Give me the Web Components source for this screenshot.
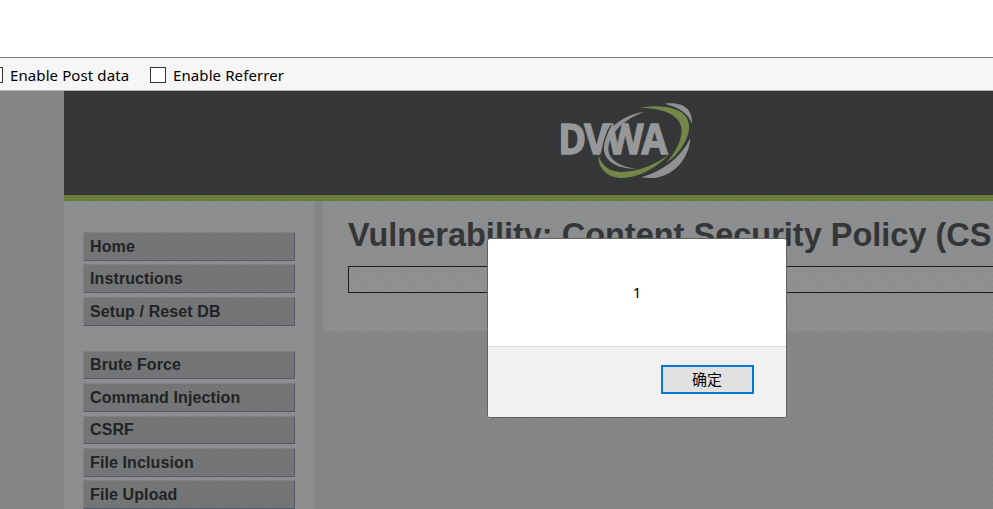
<!DOCTYPE html>
<html lang="en">
<head>
<meta charset="utf-8">
<title>DVWA</title>
<style>
html,body{margin:0;height:100%;overflow:hidden;background:#fff}
</style>
</head>
<body>
<dvwa-screen></dvwa-screen>
<script>
function define(name, html) {
  const tpl = document.createElement('template');
  tpl.innerHTML = html;
  customElements.define(name, class extends HTMLElement {
    constructor() {
      super();
      this.attachShadow({ mode: 'open' }).append(tpl.content.cloneNode(true));
    }
  });
}

define('check-option', `<style>
:host{display:flex;align-items:center;gap:7px;font:15px/20px "Noto Sans","Noto Sans CJK SC",sans-serif;color:#000;white-space:nowrap}
i{box-sizing:border-box;width:16px;height:16px;border:1px solid #333;background:#fff;flex:none}
span{display:block;width:var(--w);letter-spacing:.1px}
</style><i></i><span><slot></slot></span>`);

define('tool-bar', `<style>
:host{display:flex;box-sizing:border-box;height:34px;border-top:1px solid #777;border-bottom:1px solid #b5b9b6;background:#f6f6f6;align-items:center;gap:20px;padding-top:2px}
check-option:first-of-type{margin-left:-13px}
</style>
<check-option style="--w:120px">Enable Post data</check-option>
<check-option style="--w:112px">Enable Referrer</check-option>`);

define('dvwa-logo', `<style>
:host{display:block;width:170px;height:104px}
svg{display:block;width:170px;height:104px}
text{font-family:"Open Sans","Noto Sans",sans-serif;font-weight:700;letter-spacing:-6px}
</style>
<svg viewBox="0 3 510 312">
<g fill="#929394">
<path d="M313 66C270 70 225 94 203 130C181 168 190 205 223 223C243 233 267 238 291 236C254 232 226 220 212 200C187 158 237 91 313 66Z"/>
<path d="M374 41C424 35 458 52 456 102C447 74 423 53 374 41Z"/>
<path d="M451 145C447 204 405 254 350 263Q327 266 304 262C365 245 419 207 451 145Z"/>
</g>
<path fill="#768748" d="M298 54C350 44 408 48 436 77C457 103 448 142 419 181Q402 204 378 219C400 194 425 157 425 119C424 79 374 52 298 54Z"/>
<path fill="#768748" d="M175 195C185 226 208 245 242 246C292 247 346 224 388 193C348 237 292 263 246 264C205 264 173 238 175 195Z"/>
<text transform="translate(55 193) scale(.935 1)" font-size="121" fill="#999a9b" stroke="#999a9b" stroke-width="4">DVWA</text>
<path fill="none" stroke="#343536" stroke-width="3.500" d="M214 104Q194 137 187 181"/>
</svg>`);

define('site-header', `<style>
:host{display:flex;box-sizing:border-box;height:110px;padding-left:476px;background:#363738;border-bottom:6px solid #6a7f39}
</style><dvwa-logo></dvwa-logo>`);

define('menu-item', `<style>
:host{display:block;box-sizing:border-box;height:28.7px;border:1px solid;border-color:#808181 #585a6b #585a6b #808181;background:#757677;padding-left:6px;font:bold 16px/27.4px "Liberation Sans",Arial,sans-serif;letter-spacing:.11px;color:#222324;white-space:nowrap}
:host(.tight){line-height:25.6px}
</style><slot></slot>`);

define('menu-group', `<style>
:host{display:flex;flex-direction:column;gap:3.8px}
</style><slot></slot>`);

define('side-menu', `<style>
:host{display:flex;flex-direction:column;gap:25px;box-sizing:border-box;width:250px;height:308px;padding:30.9px 19px 0;background:#8e8f90;overflow:hidden;flex:none}
</style>
<menu-group>
<menu-item>Home</menu-item><menu-item>Instructions</menu-item><menu-item>Setup / Reset DB</menu-item>
</menu-group>
<menu-group>
<menu-item class="tight">Brute Force</menu-item><menu-item>Command Injection</menu-item><menu-item class="tight">CSRF</menu-item><menu-item>File Inclusion</menu-item><menu-item>File Upload</menu-item>
</menu-group>`);

define('main-content', `<style>
:host{display:block;box-sizing:border-box;height:130px;width:720px;padding:14px 0 0 25px;background:#8e8f90;overflow:hidden}
h1{margin:0;font:bold 32.5px/40px "Liberation Sans",Arial,sans-serif;color:#343637;white-space:nowrap}
div{box-sizing:border-box;height:27px;margin-top:11px;border:1px solid #1c1d1e;border-right:0;background:#909192}
</style><h1>Vulnerability: Content Security Policy (CS</h1><div></div>`);

define('alert-dialog', `<style>
:host{position:absolute;left:487px;top:238px;width:300px;height:180px;box-sizing:border-box;display:flex;flex-direction:column;border:1px solid #626263;border-radius:3px;background:#fff;overflow:hidden;font:15px/20px "Noto Sans","Noto Sans CJK SC",sans-serif;color:#000}
p{margin:0;flex:1;display:flex;align-items:center;justify-content:center;padding-bottom:1px}
footer{box-sizing:border-box;height:71px;background:#f1f1f1;border-top:1px solid #dfdfdf;display:flex;justify-content:flex-end;padding:18px 32px 0 0}
button{box-sizing:border-box;width:93px;height:29px;border:2px solid #0078d7;background:#e1e1e1;padding:0 1px 2px 0;font:15px/23px "Noto Sans CJK SC",sans-serif;color:#000}
</style><p><slot></slot></p><footer><button>确定</button></footer>`);

define('dvwa-screen', `<style>
:host{display:block;position:relative;width:993px;height:509px;padding-top:57px;box-sizing:border-box;overflow:hidden;background:#fff}
.page{height:418px;padding-left:64px;box-sizing:border-box;background:#868788;position:relative;overflow:hidden}
.page::after{content:"";position:absolute;inset:0;background:repeating-conic-gradient(#00000006 0 25%,#0000 0 50%) 0 0/6px 6px}
.row{display:flex;align-items:flex-start;gap:9px}
main-content{flex:none}
</style>
<tool-bar></tool-bar>
<div class="page"><site-header></site-header><div class="row"><side-menu></side-menu><main-content></main-content></div></div>
<alert-dialog>1</alert-dialog>`);
</script>
</body>
</html>
